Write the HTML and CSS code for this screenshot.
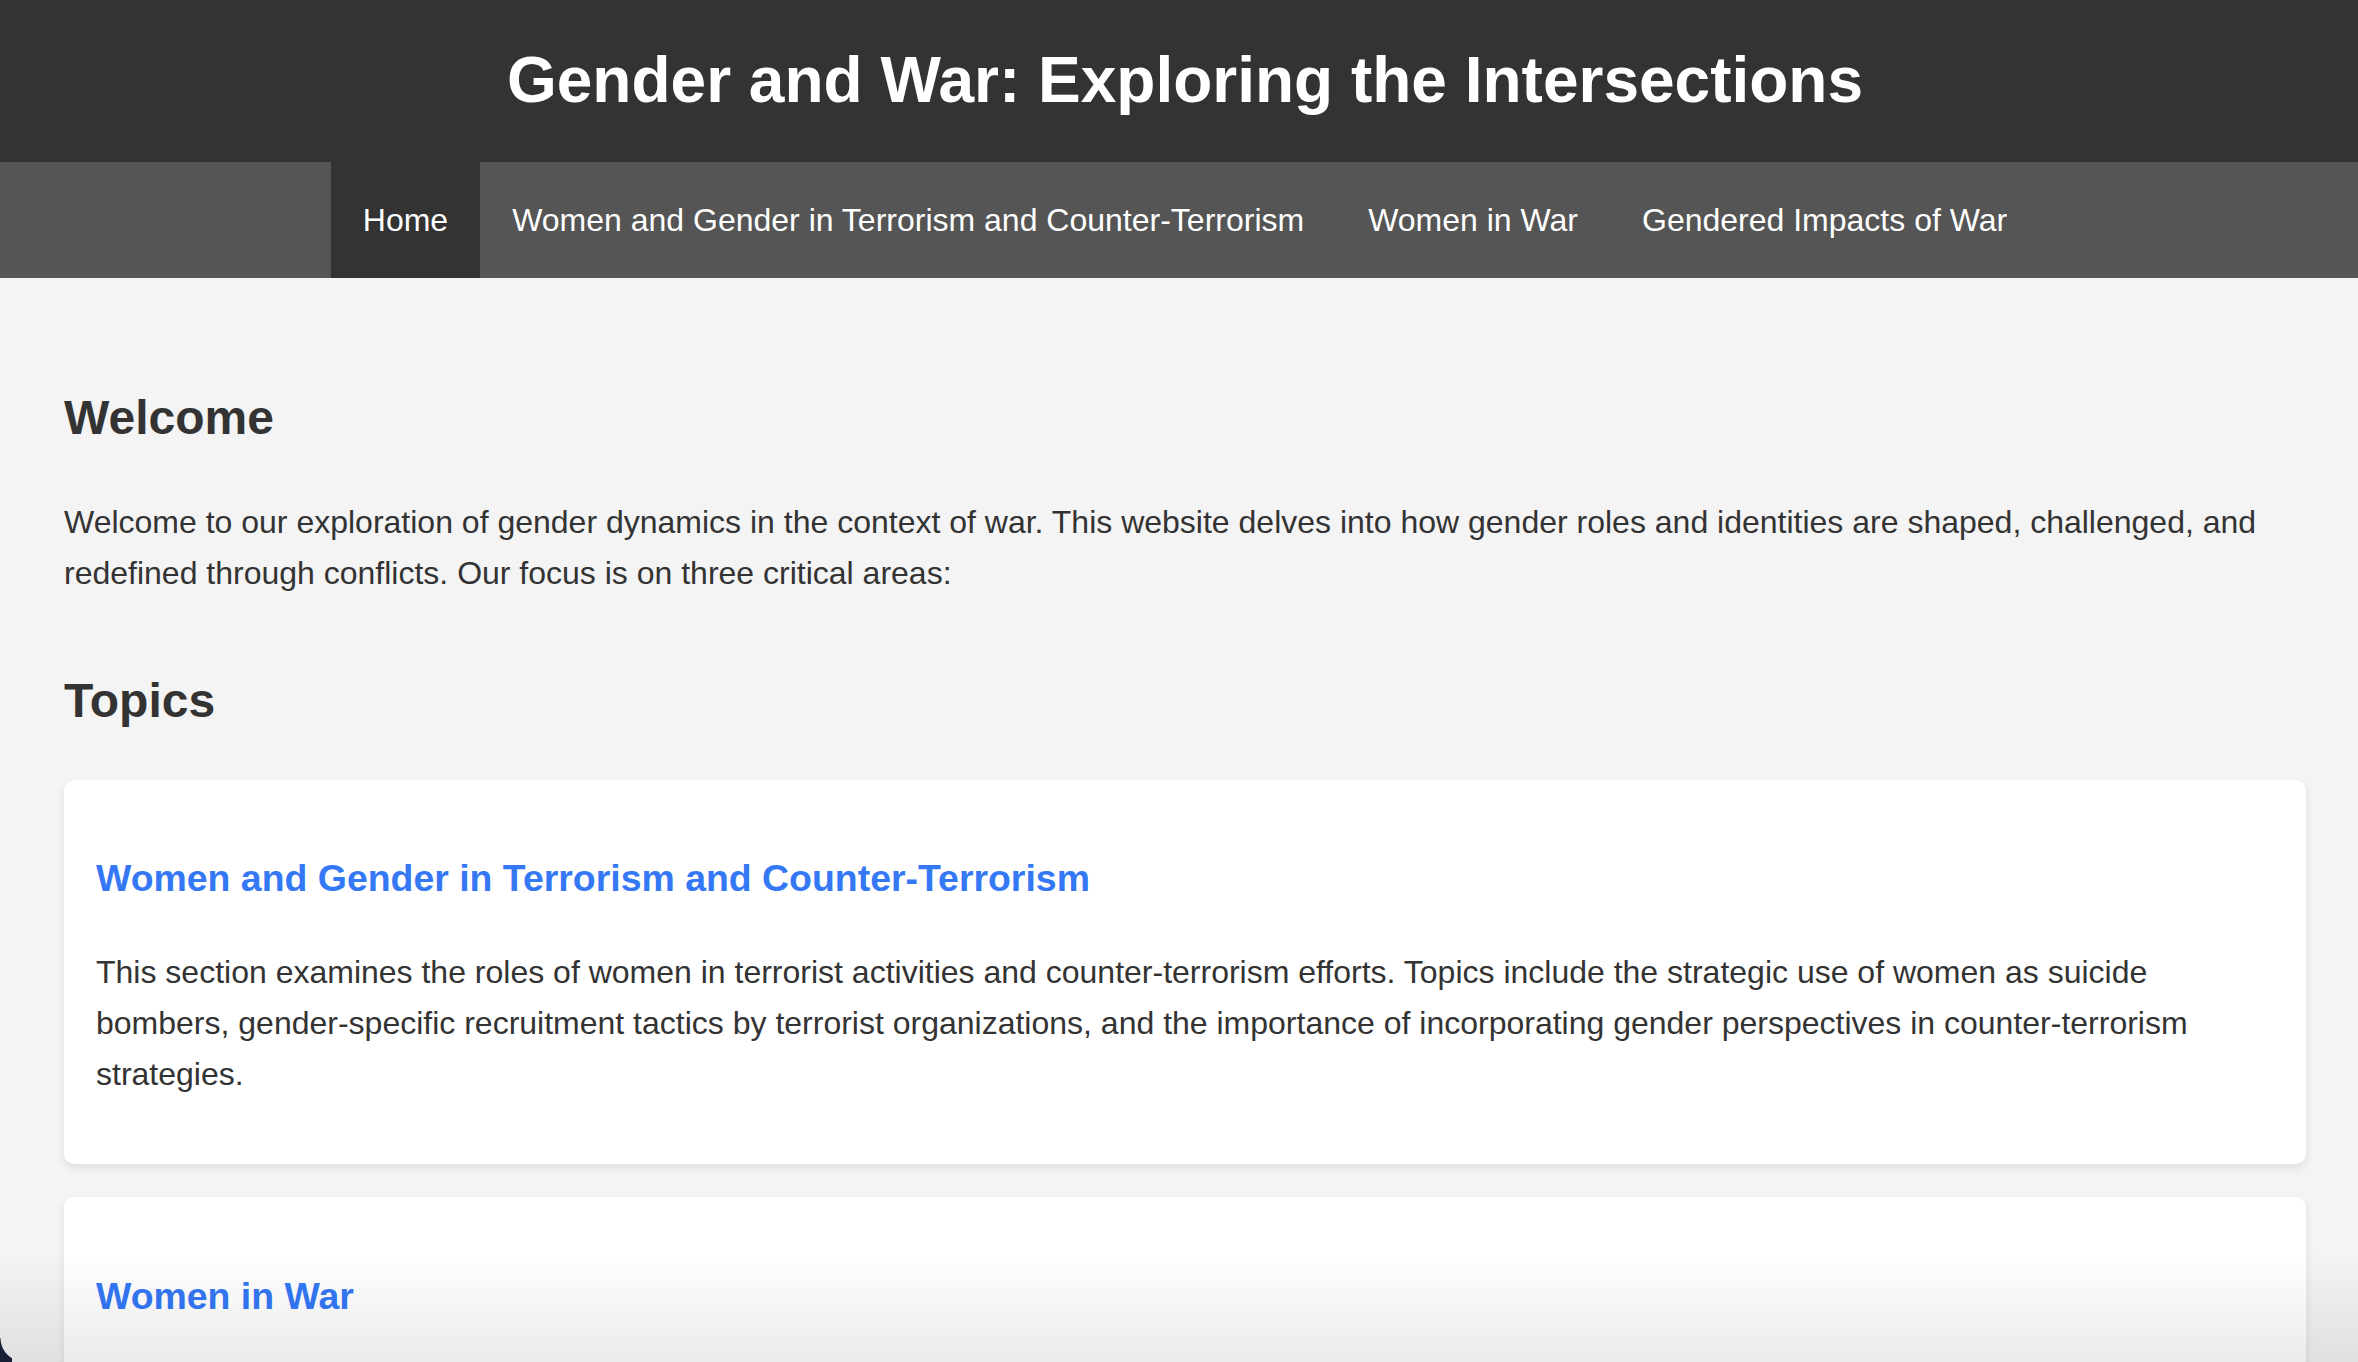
FILE: index.html
```html
<!DOCTYPE html>
<html lang="en">
<head>
<meta charset="utf-8">
<title>Gender and War: Exploring the Intersections</title>
<link rel="stylesheet" href="styles.css">
</head>
<body>
<header class="site-header">
  <h1 class="site-title">Gender and War: Exploring the Intersections</h1>
</header>
<nav class="site-nav">
  <ul class="nav-list">
    <li><a class="nav-link active" href="#">Home</a></li>
    <li><a class="nav-link" href="#">Women and Gender in Terrorism and Counter-Terrorism</a></li>
    <li><a class="nav-link" href="#">Women in War</a></li>
    <li><a class="nav-link" href="#">Gendered Impacts of War</a></li>
  </ul>
</nav>
<main class="content">
  <section class="intro">
    <h2 class="section-heading">Welcome</h2>
    <p class="intro-text">Welcome to our exploration of gender dynamics in the context of war. This website delves into how gender roles and identities are shaped, challenged, and redefined through conflicts. Our focus is on three critical areas:</p>
  </section>
  <section class="topics">
    <h2 class="section-heading">Topics</h2>
    <article class="card">
      <h3 class="card-title"><a href="#">Women and Gender in Terrorism and Counter-Terrorism</a></h3>
      <p class="card-text">This section examines the roles of women in terrorist activities and counter-terrorism efforts. Topics include the strategic use of women as suicide bombers, gender-specific recruitment tactics by terrorist organizations, and the importance of incorporating gender perspectives in counter-terrorism strategies.</p>
    </article>
    <article class="card">
      <h3 class="card-title"><a href="#">Women in War</a></h3>
    </article>
  </section>
</main>
<div class="bottom-fade"></div>
<div class="window-corner"></div>
</body>
</html>
```

FILE: styles.css
```css
html, body {
  margin: 0;
  padding: 0;
}

body {
  background: #f4f4f4;
  color: #333;
  font-family: "Liberation Sans", Arial, Helvetica, sans-serif;
  font-size: 32px;
  line-height: 1.6;
  overflow: hidden;
}

.site-header {
  background: #333;
  color: #fff;
  text-align: center;
  padding: 43px 0 45px 12px;
}

.site-title {
  margin: 0;
  font-size: 64px;
  line-height: 74px;
  font-weight: bold;
}

.site-nav {
  background: #555;
  padding-left: 12px;
}

.nav-list {
  list-style: none;
  margin: 0;
  padding: 0;
  display: flex;
  justify-content: center;
}

.nav-link {
  display: block;
  padding: 32px;
  line-height: 52px;
  color: #fff;
  text-decoration: none;
}

.nav-link.active {
  background: #333;
}

.content {
  padding: 62px 52px 0 64px;
}

.intro {
  margin-bottom: 64px;
}

.section-heading {
  font-size: 48px;
  line-height: 1.6;
  font-weight: bold;
  margin: 40px 0;
}

.intro-text {
  margin: 0;
}

.card {
  background: #fff;
  border-radius: 10px;
  padding: 32px;
  margin-bottom: 33px;
  box-shadow: 0 4px 10px rgba(0, 0, 0, 0.09);
}

.card-title {
  font-size: 37.44px;
  line-height: 1.6;
  margin: 37.44px 0;
  font-weight: bold;
}

.card-title a {
  color: #3478f6;
  text-decoration: none;
}

.card-text {
  margin: 0 0 32px;
}

.bottom-fade {
  position: fixed;
  left: 0;
  right: 0;
  bottom: 0;
  height: 110px;
  pointer-events: none;
  background: linear-gradient(to bottom, rgba(0, 0, 0, 0), rgba(0, 0, 0, 0.08));
}

.window-corner {
  position: fixed;
  left: 0;
  bottom: 0;
  width: 12px;
  height: 24px;
  background: #1a1f36;
  -webkit-mask: radial-gradient(circle at 24px 0, transparent 23px, #000 24px);
  mask: radial-gradient(circle at 24px 0, transparent 23px, #000 24px);
}
```
